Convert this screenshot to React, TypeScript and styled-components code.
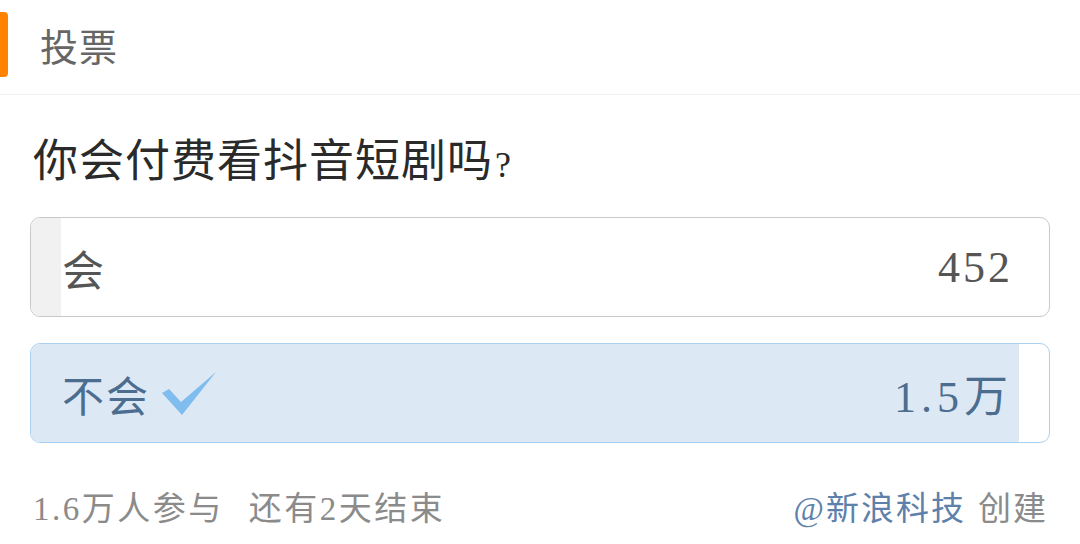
import React from "react";
import styled, { createGlobalStyle } from "styled-components";

const GlobalStyle = createGlobalStyle`
  html, body {
    margin: 0;
    padding: 0;
    background: #ffffff;
  }
  body {
    font-family: "Liberation Serif", "Noto Sans CJK SC", serif;
  }
`

const Card = styled.section`
  width: 1080px;
  height: 544px;
  overflow: hidden;
  background: #fff;
`

const Header = styled.header`
  height: 94px;
  display: flex;
  align-items: flex-start;
  border-bottom: 1px solid #f1f1f1;
`

const Accent = styled.span`
  width: 8px;
  height: 65px;
  margin-top: 12px;
  background: #ff8200;
  border-radius: 0 4px 4px 0;
`

const Title = styled.h2`
  margin: 23px 0 0 32px;
  font-size: 38px;
  line-height: 50px;
  font-weight: 400;
  color: #666;
  letter-spacing: 1px;
`

const Body = styled.div`
  padding: 0 30px;
`

const Question = styled.h1`
  margin: 36px 0 20px 3px;
  font-size: 45px;
  line-height: 63px;
  font-weight: 400;
  color: #2a2a2a;
  letter-spacing: 1px;

  .mark {
    font-size: 36px;
    margin-left: 2px;
  }
`

const Options = styled.div`
  display: flex;
  flex-direction: column;
  gap: 26px;
`

const Option = styled.div<{ $chosen?: boolean }>`
  position: relative;
  height: 100px;
  box-sizing: border-box;
  border: 1.5px solid ${p => (p.$chosen ? "#a9d0f1" : "#c9c9c9")};
  border-radius: 10px;
  overflow: hidden;
  display: flex;
  align-items: center;
  justify-content: space-between;
  padding: 0 36px 0 31px;
  color: ${p => (p.$chosen ? "#4b6d90" : "#555")};
`

const Fill = styled.div<{ $chosen?: boolean }>`
  position: absolute;
  left: 0;
  top: 0;
  bottom: 0;
  background: ${p => (p.$chosen ? "#dde8f5" : "#f1f1f1")};
`

const Label = styled.span`
  position: relative;
  display: flex;
  align-items: center;
  font-size: 42px;
  letter-spacing: 2px;

  svg {
    margin-left: 12px;
    margin-top: 2px;
  }
`

const Count = styled.span<{ $wide?: boolean }>`
  position: relative;
  font-size: 44px;
  letter-spacing: ${p => (p.$wide ? "5px" : "3px")};
`

const Footer = styled.footer`
  margin-top: 43px;
  padding: 0 32px 0 33px;
  display: flex;
  justify-content: space-between;
  align-items: center;
  font-size: 33px;
  line-height: 46px;
  color: #8b8b8b;
`

const Stats = styled.span`
  letter-spacing: 2.5px;

  .gap {
    margin-left: 25px;
  }
`

const Creator = styled.span`
  letter-spacing: 2px;
`

const Author = styled.span`
  color: #5d81aa;
  margin-right: 12px;
`

const Check = () => (
  <svg width="54" height="44" viewBox="0 0 54 44">
    <path d="M0 21 L7 17 L19 30 L54 0 L20 43 Z" fill="#7fbdef" />
  </svg>
)

const options = [
  { label: "会", votes: 452, text: "452", chosen: false },
  { label: "不会", votes: 15000, text: "1.5万", chosen: true },
]

const total = options.reduce((s, o) => s + o.votes, 0)

export default function App() {
  return (
    <Card>
      <GlobalStyle />
      <Header>
        <Accent />
        <Title>投票</Title>
      </Header>
      <Body>
        <Question>
          你会付费看抖音短剧吗<span className="mark">?</span>
        </Question>
        <Options>
          {options.map(o => (
            <Option key={o.label} $chosen={o.chosen}>
              <Fill
                $chosen={o.chosen}
                style={{ width: `${(o.votes / total) * 100}%` }}
              />
              <Label>
                {o.label}
                {o.chosen && <Check />}
              </Label>
              <Count $wide={o.chosen}>{o.text}</Count>
            </Option>
          ))}
        </Options>
      </Body>
      <Footer>
        <Stats>
          1.6万人参与<span className="gap">还有2天结束</span>
        </Stats>
        <Creator>
          <Author>@新浪科技</Author>创建
        </Creator>
      </Footer>
    </Card>
  )
}
